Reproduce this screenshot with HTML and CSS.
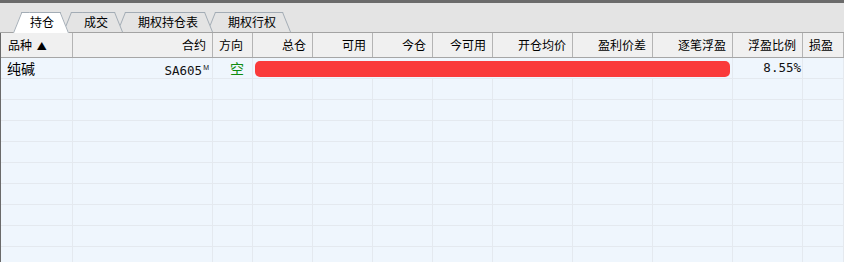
FILE: index.html
```html
<!DOCTYPE html>
<html lang="zh-CN">
<head>
    <meta charset="UTF-8">
    <title>持仓</title>
    <link rel="stylesheet" href="styles.css">
</head>
<body>
    <div class="topline"></div>

    <div class="tabbar">
        <span class="tab active">持仓</span>
        <span class="tab">成交</span>
        <span class="tab">期权持仓表</span>
        <span class="tab">期权行权</span>
    </div>

    <div class="table" id="table">
        <div class="row head">
            <div class="cell left">品种 <span class="sort">▲</span></div>
            <div class="cell">合约</div>
            <div class="cell left">方向</div>
            <div class="cell">总仓</div>
            <div class="cell">可用</div>
            <div class="cell">今仓</div>
            <div class="cell">今可用</div>
            <div class="cell">开仓均价</div>
            <div class="cell">盈利价差</div>
            <div class="cell">逐笔浮盈</div>
            <div class="cell">浮盈比例</div>
            <div class="cell left">损盈</div>
        </div>

        <div class="row data">
            <div class="cell left name">纯碱</div>
            <div class="cell mono code">SA605<sup>M</sup></div>
            <div class="cell dir">空</div>
            <div class="cell span-bar"><div class="bar"></div></div>
            <div class="cell mono pct">8.55%</div>
            <div class="cell"></div>
        </div>
    </div>

    <script>
        // 补齐空白行
        const table = document.getElementById('table');
        for (let i = 0; i < 9; i++) {
            const row = document.createElement('div');
            row.className = 'row data';
            for (let j = 0; j < 12; j++) {
                const cell = document.createElement('div');
                cell.className = 'cell';
                row.appendChild(cell);
            }
            table.appendChild(row);
        }
    </script>
</body>
</html>
```

FILE: styles.css
```css
:root {
    --cols: 72px 140px 40px 60px 60px 60px 60px 80px 80px 80px 70px 41px;
    --grid-line: #e4e9ef;
}

body {
    margin: 0;
    height: 262px;
    overflow: hidden;
    background: #eff6fd;
    font-family: "Noto Sans CJK SC", "Liberation Sans", sans-serif;
    font-size: 12px;
    color: #000;
}

.topline {
    height: 3px;
    background: #6b6b6b;
}

/* 标签栏 */
.tabbar {
    height: 29px;
    background: #e4e4e4;
    border-bottom: 1px solid #a3a3a3;
    display: flex;
    align-items: flex-end;
    padding-left: 13px;
}

.tab {
    position: relative;
    height: 20px;
    line-height: 20px;
    padding: 0 15px 0 21px;
    margin-left: -6px;
    z-index: 1;
}

.tab::before,
.tab::after {
    content: "";
    position: absolute;
    top: 0;
    bottom: 0;
    background: #e4e4e4;
    border-top: 1px solid #a3acb5;
    transform-origin: bottom;
    z-index: -1;
}

.tab::before {
    left: 0;
    right: 45%;
    border-left: 1px solid #a3acb5;
    transform: skewX(-22deg);
}

.tab::after {
    left: 45%;
    right: 0;
    border-right: 1px solid #a3acb5;
    transform: skewX(22deg);
}

.tab:nth-child(2) { z-index: 3; }
.tab:nth-child(3) { z-index: 2; }
.tab:nth-child(4) { z-index: 1; }

.tab.active {
    margin-left: 0;
    padding: 0 15px 0 17px;
    height: 21px;
    margin-bottom: -1px;
    z-index: 4;
}

.tab.active::before,
.tab.active::after {
    background: #fff;
}

/* 表格 */
.table {
    border-left: 1px solid #6a6a6a;
}

.row {
    display: grid;
    grid-template-columns: var(--cols);
}

.cell {
    box-sizing: border-box;
    text-align: right;
    padding: 0 6px;
    white-space: nowrap;
    overflow: hidden;
}

.cell.left {
    text-align: left;
}

.head {
    height: 25px;
    background: #f0f0f0;
    border-bottom: 1px solid #a6a6a6;
    box-sizing: border-box;
}

.head .cell {
    line-height: 24px;
    border-right: 1px solid #b4b4b4;
}

.head .cell:first-child {
    padding-left: 7px;
}

.sort {
    font-size: 10px;
    margin-left: 2px;
}

.data {
    height: 21px;
}

.data .cell {
    line-height: 20px;
    border-right: 1px solid var(--grid-line);
    border-bottom: 1px solid var(--grid-line);
}

.name {
    font-size: 14px;
    padding-left: 6px;
}

.mono {
    font-family: "DejaVu Sans Mono", "Liberation Mono", monospace;
    font-size: 12.5px;
    color: #111;
}

.code {
    padding-right: 3px;
}

.code sup {
    font-family: "Liberation Sans", sans-serif;
    font-size: 7px;
    vertical-align: 5px;
    margin-left: 1px;
}

.dir {
    color: #118c11;
    font-size: 14px;
    text-align: left;
    padding-left: 17px;
}

.span-bar {
    grid-column: 4 / 11;
    padding: 3px 2px 0 2px;
}

.bar {
    height: 16px;
    background: #fa3a3a;
    border-radius: 5px;
}

.pct {
    padding-right: 1px;
}
```
